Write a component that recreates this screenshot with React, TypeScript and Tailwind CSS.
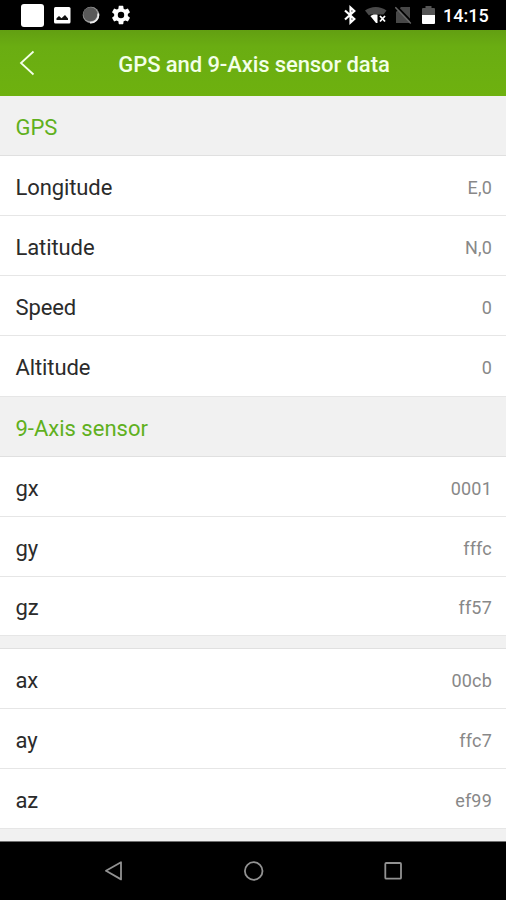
type Item = { label: string; value: string; size?: string };

const gps: Item[] = [
  { label: "Longitude", value: "E,0" },
  { label: "Latitude", value: "N,0" },
  { label: "Speed", value: "0" },
  { label: "Altitude", value: "0", size: "h-[61px]" },
];

const gyro: Item[] = [
  { label: "gx", value: "0001" },
  { label: "gy", value: "fffc" },
  { label: "gz", value: "ff57", size: "h-[59px]" },
];

const accel: Item[] = [
  { label: "ax", value: "00cb" },
  { label: "ay", value: "ffc7" },
  { label: "az", value: "ef99" },
];

function Rows({ items }: { items: Item[] }) {
  return (
    <ul>
      {items.map((item) => (
        <li
          key={item.label}
          className={`${item.size ?? "h-[60px]"} flex items-center justify-between border-b border-[#e6e6e6] bg-white pr-[14px] pl-[15.5px]`}
        >
          <span className="pt-[4px] text-[22px] leading-7 tracking-[-0.1px] text-[#2b2b2b]">{item.label}</span>
          <span className="pt-[4px] text-[18px] leading-7 tracking-[0.2px] text-[#888888]">{item.value}</span>
        </li>
      ))}
    </ul>
  );
}

function SectionTitle({ children }: { children: string }) {
  return (
    <h2 className="flex h-[60px] shrink-0 items-center border-b border-[#e0e0e0] bg-[#f1f1f1] pt-[4px] pl-[15.5px] text-[22px] leading-7 text-[#60b01d]">
      {children}
    </h2>
  );
}

function StatusBar() {
  return (
    <div className="flex h-[30px] shrink-0 items-center justify-between bg-black pr-[18px] pl-[21px]">
      <div className="flex items-center">
        <div className="size-[23px] rounded-[3px] bg-white" />
        <svg className="ml-[9px]" width="18" height="18" viewBox="0 0 18 18">
          <rect x="1" y="1" width="16.500" height="16.500" rx="1.500" fill="#fff" />
          <path d="M3.500 14V12.200L6 10l2.500 2.300L12 9l3 3.500V14z" fill="#111" />
        </svg>
        <svg className="ml-[10px]" width="20" height="20" viewBox="0 0 20 20">
          <circle cx="10" cy="10" r="8.3" fill="#999" />
          <circle cx="9.3" cy="9.3" r="7" fill="#595959" />
          <path d="M17.3 8.5A7.8 7.8 0 0 1 9 17.6" stroke="#eee" strokeWidth="1.7" fill="none" />
        </svg>
        <svg className="ml-[9px]" width="22" height="22" viewBox="0 0 24 24" fill="#fff">
          <path d="M19.43 12.98c.04-.32.07-.64.07-.98s-.03-.66-.07-.98l2.11-1.65c.19-.15.24-.42.12-.64l-2-3.46c-.12-.22-.39-.3-.61-.22l-2.49 1c-.52-.4-1.08-.73-1.69-.98l-.38-2.65A.488.488 0 0 0 14 2h-4c-.25 0-.46.18-.49.42l-.38 2.65c-.61.25-1.17.59-1.69.98l-2.49-1c-.23-.09-.49 0-.61.22l-2 3.46c-.13.22-.07.49.12.64l2.11 1.65c-.04.32-.07.65-.07.98s.03.66.07.98l-2.11 1.65c-.19.15-.24.42-.12.64l2 3.46c.12.22.39.3.61.22l2.49-1c.52.4 1.08.73 1.69.98l.38 2.65c.03.24.24.42.49.42h4c.25 0 .46-.18.49-.42l.38-2.65c.61-.25 1.17-.59 1.69-.98l2.49 1c.23.09.49 0 .61-.22l2-3.46c.12-.22.07-.49-.12-.64zM12 15.500a3.500 3.500 0 1 1 0-7 3.500 3.500 0 0 1 0 7" />
        </svg>
      </div>
      <div className="flex items-center">
        <svg width="14" height="20" viewBox="0 0 14 20" fill="none" stroke="#fff" strokeWidth="2.200">
          <path d="M2 5.500 11.300 14 7.500 17.500V2.500l3.800 3.500L2 14.500" />
        </svg>
        <svg className="ml-[8px]" width="22" height="18" viewBox="0 0 22 18">
          <path d="M0 4.500C6-.3 15.500-.3 21.500 4.500L18.500 8.500H5.500L4 9.500z" fill="#4a4a4a" />
          <path d="M5.300 10C7.300 8.300 10 8 12.500 8.800V17H11z" fill="#fff" />
          <path d="m15 10 5 5.500m0-5.500-5 5.500" stroke="#fff" strokeWidth="1.800" />
        </svg>
        <svg className="ml-[8px]" width="17" height="18" viewBox="0 0 17 18">
          <path d="M6 1h9v16H1V6z" fill="#484848" />
          <path d="m1.500 0 15.500 16" stroke="#000" strokeWidth="1.800" />
          <path d="m.3 1.300 15.500 16.200" stroke="#666" strokeWidth="1.500" />
        </svg>
        <svg className="ml-[10px]" width="13" height="20" viewBox="0 0 13 20">
          <path d="M3.500 1h6v2H12a1 1 0 0 1 1 1v6H0V4a1 1 0 0 1 1-1h2.500z" fill="#555" />
          <path d="M0 10h13v8a1 1 0 0 1-1 1H1a1 1 0 0 1-1-1z" fill="#fff" />
        </svg>
        <time className="ml-[8px] w-[45px] pt-[2px] text-[18px] leading-6 font-medium whitespace-nowrap text-white">14:15</time>
      </div>
    </div>
  );
}

function NavigationBar() {
  return (
    <nav className="flex h-[59px] shrink-0 items-center justify-between border-t border-[#707070] bg-black pr-[103px] pl-[104px]">
      <svg width="20" height="20" viewBox="0 0 20 20" fill="none" stroke="#929292" strokeWidth="1.800">
        <path d="M17 1.200v17.200L2 9.800z" strokeLinejoin="round" />
      </svg>
      <svg width="20" height="20" viewBox="0 0 20 20" fill="none" stroke="#929292" strokeWidth="1.800">
        <circle cx="9.700" cy="10" r="8.800" />
      </svg>
      <svg width="20" height="20" viewBox="0 0 20 20" fill="none" stroke="#929292" strokeWidth="1.800">
        <rect x="2.300" y="2" width="15.700" height="15.700" rx="1" />
      </svg>
    </nav>
  );
}

export default function App() {
  return (
    <div className="flex h-[900px] w-[506px] flex-col overflow-hidden bg-[#f1f1f1] font-['Roboto',sans-serif]">
      <StatusBar />
      <header className="grid h-[66px] shrink-0 grid-cols-[64px_1fr_62px] items-center bg-linear-to-b from-[#629f12] via-[#6aad12] via-25% to-[#6eb10f]">
        <button className="flex h-full items-center pl-[19px]" aria-label="Back">
          <svg width="17" height="26" viewBox="0 0 17 26" fill="none" stroke="#f3ffe8" strokeWidth="1.800">
            <path d="M14.500 1.500 2 13l12.500 11.500" />
          </svg>
        </button>
        <h1 className="pt-[3px] text-center text-[22px] leading-7 font-medium tracking-[-0.09px] whitespace-nowrap text-[#f3ffe8]">GPS and 9-Axis sensor data</h1>
      </header>
      <main className="flex flex-1 flex-col">
        <SectionTitle>GPS</SectionTitle>
        <Rows items={gps} />
        <SectionTitle>9-Axis sensor</SectionTitle>
        <Rows items={gyro} />
        <div className="h-[13px] shrink-0 border-b border-[#e0e0e0]" />
        <Rows items={accel} />
      </main>
      <NavigationBar />
    </div>
  );
}
